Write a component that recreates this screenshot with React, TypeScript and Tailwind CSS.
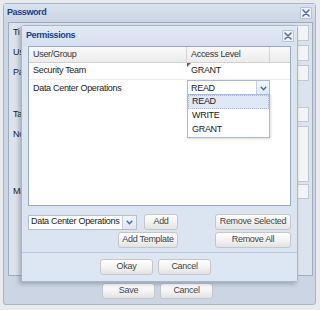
import React from "react";

function CloseBtn() {
  return (
    <div className="w-[12px] h-[12px] flex items-center justify-center border border-[#b3c2d8] bg-[#eef2f8] rounded-[1px]">
      <svg width="8" height="8" viewBox="0 0 8 8">
        <path d="M1 1 L7 7 M7 1 L1 7" stroke="#5d6f9a" strokeWidth="1.6" strokeLinecap="round" />
      </svg>
    </div>
  );
}

function Btn({ label, w }: { label: string; w: string }) {
  return (
    <div
      className={`${w} h-[16px] flex items-center justify-center whitespace-nowrap border border-[#c6c6c6] rounded-[3px] bg-linear-to-b from-white via-[#f4f4f4] to-[#e2e2e2] text-[#444]`}
    >
      {label}
    </div>
  );
}

function Chevron() {
  return (
    <svg width="7" height="5" viewBox="0 0 7 5">
      <path d="M0.8 0.8 L3.5 3.8 L6.2 0.8" stroke="#4a6a9c" strokeWidth="1.4" fill="none" />
    </svg>
  );
}

// the form behind the dialog: only the first letters of its labels show
const fields = [
  { label: "Ti", mt: "mt-[2px]" },
  { label: "Us", mt: "mt-[4px]" },
  { label: "Pa", mt: "mt-[4px]" },
];

export default function App() {
  return (
    <div
      className="relative w-[320px] h-[310px] overflow-hidden bg-[#e9eaec] text-[9px] tracking-[-0.3px]"
      style={{ fontFamily: '"Liberation Sans", Arial, sans-serif' }}
    >
      {/* Password window */}
      <div className="absolute left-[3px] top-[3px] w-[313px] h-[302px] flex flex-col border border-[#a7b5c8] rounded-[3px] bg-[#cbd5e3]">
        <div className="h-[18px] flex items-center justify-between pl-[3px] pr-[3px] bg-linear-to-b from-[#d9e2ee] to-[#cbd5e3]">
          <span className="font-bold text-[#15428b] tracking-[-0.4px]">Password</span>
          <CloseBtn />
        </div>
        <div className="ml-[4px] w-[305px] h-[254px] border border-[#9eacc0] bg-[#dde3ec] flex flex-col pl-[4px] pr-[3px] text-[#222]">
          {fields.map((f) => (
            <div key={f.label} className={`flex items-center ${f.mt}`}>
              <span className="w-[80px]">{f.label}</span>
              <div className="flex-1 h-[16px] border border-[#c2c8d2] bg-[#f3f4f6]" />
            </div>
          ))}
          <div className="flex items-center mt-[26px]">
            <span className="w-[80px]">Ta</span>
            <div className="flex-1 h-[15px] border border-[#c2c8d2] bg-[#f3f4f6]" />
          </div>
          <div className="flex items-start mt-[4px]">
            <span className="w-[80px] pt-[2px]">No</span>
            <div className="flex-1 h-[56px] border border-[#c2c8d2] bg-[#f3f4f6]" />
          </div>
          <div className="flex items-center mt-[2px]">
            <span className="w-[80px]">Ma</span>
            <div className="flex-1 h-[15px] border border-[#c2c8d2] bg-[#f3f4f6]" />
          </div>
        </div>
        <div className="flex justify-center gap-[5px] pt-[7px] pr-[4px]">
          <Btn label="Save" w="w-[53px]" />
          <Btn label="Cancel" w="w-[53px]" />
        </div>
      </div>

      {/* Permissions window */}
      <div className="absolute left-[21px] top-[25px] w-[277px] h-[257px] flex flex-col border border-[#a3b6d2] rounded-[3px] bg-[#dbe4f1] shadow-[-2px_2px_4px_rgba(60,70,90,0.35)]">
        <div className="h-[20px] flex items-center justify-between pl-[4px] pr-[3px] bg-linear-to-b from-[#e1e9f4] to-[#d6e0ee]">
          <span className="font-bold text-[#15428b] tracking-[-0.4px]">Permissions</span>
          <CloseBtn />
        </div>
        <div className="flex flex-col px-[6px] pb-[4px] border-b border-[#b9c8dc]">
          {/* grid */}
          <div className="relative h-[160px] border border-[#99a8c0] bg-white text-[#222]">
            <div className="flex h-[16px] border-b border-[#d0d0d0] bg-linear-to-b from-[#f9f9f9] to-[#ececec] text-[#333]">
              <div className="w-[158px] pl-[4px] flex items-center border-r border-[#d5d5d5]">User/Group</div>
              <div className="w-[83px] pl-[4px] flex items-center border-r border-[#d5d5d5]">Access Level</div>
              <div className="flex-1" />
            </div>
            <div className="flex h-[17px] border-b border-[#ededed]">
              <div className="w-[158px] pl-[4px] flex items-center">Security Team</div>
              <div className="relative w-[83px] pl-[4px] flex items-center">
                <div className="absolute left-0 top-0 w-0 h-0 border-t-[4px] border-r-[4px] border-t-[#c0392b] border-r-transparent" />
                GRANT
              </div>
            </div>
            <div className="flex h-[17px]">
              <div className="w-[158px] pl-[4px] flex items-center">Data Center Operations</div>
              <div className="w-[83px] flex items-center border border-[#a9b9d0] bg-white">
                <span className="flex-1 pl-[3px]">READ</span>
                <div className="w-[13px] h-full flex items-center justify-center border-l border-[#c3cfe0] bg-linear-to-b from-[#f3f6fb] to-[#dde6f2]">
                  <Chevron />
                </div>
              </div>
            </div>
            {/* dropdown list */}
            <div className="absolute left-[158px] top-[47px] w-[83px] h-[44px] flex flex-col border border-[#a9bad6] bg-white shadow-[1px_1px_2px_rgba(0,0,0,0.15)]">
              <div className="h-[14px] pl-[3px] flex items-center bg-[#dfe8f6] border border-dotted border-[#a3bae9]">READ</div>
              <div className="h-[15px] pl-[4px] flex items-center">WRITE</div>
              <div className="h-[14px] pl-[4px] flex items-center">GRANT</div>
            </div>
          </div>
          {/* toolbar */}
          <div className="flex justify-between mt-[8px]">
            <div className="flex flex-col items-end gap-[2px]">
              <div className="flex items-center gap-[7px]">
                <div className="flex w-[109px] h-[15px] border border-[#b5bfcc] bg-white text-[#222]">
                  <span className="flex-1 pl-[2px] flex items-center whitespace-nowrap overflow-hidden">Data Center Operations</span>
                  <div className="w-[14px] flex items-center justify-center border-l border-[#c3cfe0] bg-linear-to-b from-[#f3f6fb] to-[#dde6f2]">
                    <Chevron />
                  </div>
                </div>
                <Btn label="Add" w="w-[34px]" />
              </div>
              <Btn label="Add Template" w="w-[60px]" />
            </div>
            <div className="flex flex-col gap-[2px]">
              <Btn label="Remove Selected" w="w-[76px]" />
              <Btn label="Remove All" w="w-[76px]" />
            </div>
          </div>
        </div>
        <div className="flex justify-center gap-[5px] pt-[6px] pr-[8px] bg-[#dde6f3] flex-1">
          <Btn label="Okay" w="w-[53px]" />
          <Btn label="Cancel" w="w-[53px]" />
        </div>
      </div>
    </div>
  );
}
